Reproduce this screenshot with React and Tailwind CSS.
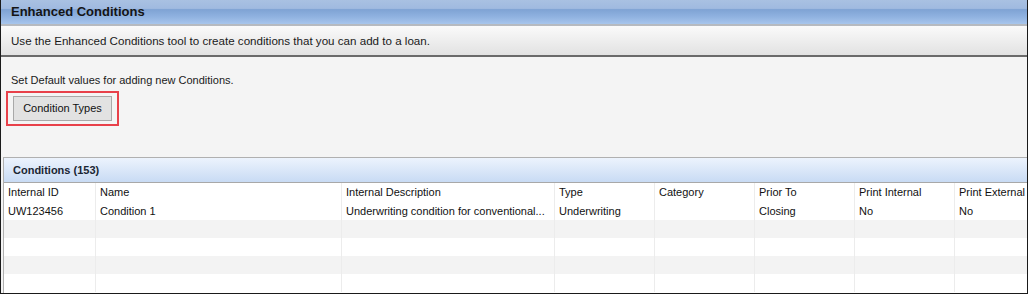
const columns = [
  { label: "Internal ID", w: "w-[91px]" },
  { label: "Name", w: "w-[246px]" },
  { label: "Internal Description", w: "w-[213px]" },
  { label: "Type", w: "w-[100px]" },
  { label: "Category", w: "w-[100px]" },
  { label: "Prior To", w: "w-[100px]" },
  { label: "Print Internal", w: "w-[100px]" },
  { label: "Print External", w: "flex-1" },
];

const rows = [
  ["UW123456", "Condition 1", "Underwriting condition for conventional...", "Underwriting", "", "Closing", "No", "No"],
  ["", "", "", "", "", "", "", ""],
  ["", "", "", "", "", "", "", ""],
  ["", "", "", "", "", "", "", ""],
  ["", "", "", "", "", "", "", ""],
];

function Row({ cells, height, bg, pad = "" }) {
  return (
    <div className={`flex ${height} ${bg}`}>
      {columns.map((c, i) => (
        <div
          key={c.label}
          className={`${c.w} ${pad} flex items-center overflow-hidden whitespace-nowrap pl-[4px] ${i > 0 ? "border-l border-[#ececec]" : ""}`}
        >
          {cells[i]}
        </div>
      ))}
    </div>
  );
}

export default function App() {
  return (
    <div className="w-[1028px] h-[294px] flex flex-col overflow-hidden border-x border-b border-[#1a1a1a] bg-[#f4f4f4] font-['Liberation_Sans',Arial,sans-serif] text-[#1a1a1a]">
      <div className="h-[24px] shrink-0 flex items-center pl-[10px] bg-[linear-gradient(to_bottom,#a9c1e2_0%,#a0bae0_35%,#7fa3d4_40%,#90b2e0_70%,#a7c5ec_100%)]">
        <span className="text-[13px] font-bold text-[#141414]">Enhanced Conditions</span>
      </div>
      <div className="h-[2px] shrink-0 bg-[#b6bac0]" />
      <div className="h-[29px] shrink-0 flex items-center pl-[10px] text-[11.6px] bg-[linear-gradient(to_bottom,#fafafa,#e2e2e2)]">
        Use the Enhanced Conditions tool to create conditions that you can add to a loan.
      </div>
      <div className="h-[2px] shrink-0 bg-[#6a6a6a]" />
      <div className="flex-1 flex flex-col">
        <div className="pl-[10px] pt-[16px] text-[11px] leading-[14px]">Set Default values for adding new Conditions.</div>
        <div className="ml-[5px] mt-[4px] w-[113px] h-[35px] border-2 border-[#e8414a] flex items-center justify-center">
          <button
            type="button"
            className="w-[99px] h-[25px] bg-[#e2e2e2] border border-[#a9a9a9] text-[11px] text-[#111]"
          >
            Condition Types
          </button>
        </div>
        <div className="mt-[31px] ml-[2px] flex-1 flex flex-col border-l border-t border-[#b0b0b0] bg-white">
          <div className="h-[25px] shrink-0 flex items-center pl-[9px] border-b border-[#a8a8a8] bg-[linear-gradient(to_bottom,#ecf3fd,#c8dbf4)]">
            <span className="text-[11px] font-bold text-[#1b2633]">Conditions (153)</span>
          </div>
          <div className="text-[11px] text-[#111]">
            <Row cells={columns.map((c) => c.label)} height="h-[18px]" bg="bg-white" />
            <Row cells={rows[0]} height="h-[19px]" bg="bg-white" pad="pt-[2px]" />
            <Row cells={rows[1]} height="h-[18px]" bg="bg-[#f3f3f3]" />
            <Row cells={rows[2]} height="h-[18px]" bg="bg-white" />
            <Row cells={rows[3]} height="h-[18px]" bg="bg-[#f3f3f3]" />
            <Row cells={rows[4]} height="h-[18px]" bg="bg-white" />
          </div>
        </div>
      </div>
    </div>
  );
}
